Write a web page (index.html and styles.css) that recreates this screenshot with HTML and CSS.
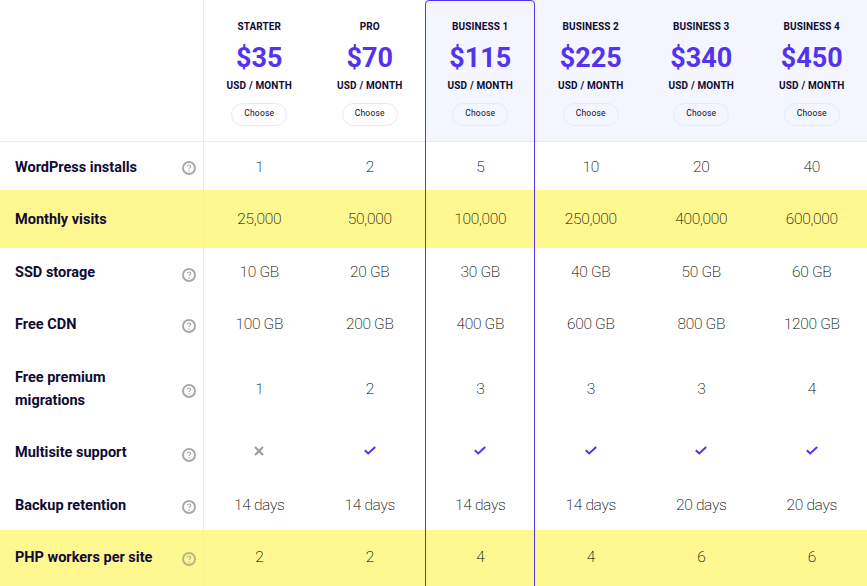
FILE: index.html
```html
<!DOCTYPE html>
<html lang="en">
<head>
<meta charset="utf-8">
<title>Plans</title>
<link rel="stylesheet" href="styles.css">
</head>
<body>
<svg class="defs" width="0" height="0" aria-hidden="true">
  <symbol id="q" viewBox="0 0 14 14">
    <circle cx="7" cy="7" r="6" fill="none" stroke="currentColor" stroke-width="2"/>
    <path d="M5.3 5.6c0-1 .7-1.6 1.7-1.6s1.7.6 1.7 1.4c0 1.2-1.7 1.3-1.7 2.6" fill="none" stroke="currentColor" stroke-width="1.2"/>
    <circle cx="7" cy="10" r=".8" fill="currentColor"/>
  </symbol>
  <symbol id="check" viewBox="0 0 12 9">
    <path d="M.8 4.2 4.2 7.4 11.2 1" fill="none" stroke="currentColor" stroke-width="2"/>
  </symbol>
  <symbol id="cross" viewBox="0 0 10 10">
    <path d="M1 1l8 8M9 1 1 9" fill="none" stroke="currentColor" stroke-width="2"/>
  </symbol>
</svg>
<main class="table">
  <div class="row head">
    <div class="label blank"></div>
    <div class="plan"><span class="name">STARTER</span><span class="price">$35</span><span class="unit">USD / MONTH</span><button class="choose">Choose</button></div>
    <div class="plan"><span class="name">PRO</span><span class="price">$70</span><span class="unit">USD / MONTH</span><button class="choose">Choose</button></div>
    <div class="plan biz"><span class="name">BUSINESS 1</span><span class="price">$115</span><span class="unit">USD / MONTH</span><button class="choose">Choose</button></div>
    <div class="plan biz"><span class="name">BUSINESS 2</span><span class="price">$225</span><span class="unit">USD / MONTH</span><button class="choose">Choose</button></div>
    <div class="plan biz"><span class="name">BUSINESS 3</span><span class="price">$340</span><span class="unit">USD / MONTH</span><button class="choose">Choose</button></div>
    <div class="plan biz"><span class="name">BUSINESS 4</span><span class="price">$450</span><span class="unit">USD / MONTH</span><button class="choose">Choose</button></div>
  </div>
  <div class="row r-installs">
    <div class="label"><span>WordPress installs</span><svg class="help"><use href="#q"/></svg></div>
    <div class="val">1</div><div class="val">2</div><div class="val">5</div><div class="val">10</div><div class="val">20</div><div class="val">40</div>
  </div>
  <div class="row hl r-visits">
    <div class="label"><span>Monthly visits</span></div>
    <div class="val">25,000</div><div class="val">50,000</div><div class="val">100,000</div><div class="val">250,000</div><div class="val">400,000</div><div class="val">600,000</div>
  </div>
  <div class="row r-ssd">
    <div class="label"><span>SSD storage</span><svg class="help"><use href="#q"/></svg></div>
    <div class="val">10 GB</div><div class="val">20 GB</div><div class="val">30 GB</div><div class="val">40 GB</div><div class="val">50 GB</div><div class="val">60 GB</div>
  </div>
  <div class="row r-cdn">
    <div class="label"><span>Free CDN</span><svg class="help"><use href="#q"/></svg></div>
    <div class="val">100 GB</div><div class="val">200 GB</div><div class="val">400 GB</div><div class="val">600 GB</div><div class="val">800 GB</div><div class="val">1200 GB</div>
  </div>
  <div class="row r-migr">
    <div class="label"><span>Free premium<br>migrations</span><svg class="help"><use href="#q"/></svg></div>
    <div class="val">1</div><div class="val">2</div><div class="val">3</div><div class="val">3</div><div class="val">3</div><div class="val">4</div>
  </div>
  <div class="row r-multi">
    <div class="label"><span>Multisite support</span><svg class="help"><use href="#q"/></svg></div>
    <div class="val"><svg class="no"><use href="#cross"/></svg></div>
    <div class="val"><svg class="yes"><use href="#check"/></svg></div>
    <div class="val"><svg class="yes"><use href="#check"/></svg></div>
    <div class="val"><svg class="yes"><use href="#check"/></svg></div>
    <div class="val"><svg class="yes"><use href="#check"/></svg></div>
    <div class="val"><svg class="yes"><use href="#check"/></svg></div>
  </div>
  <div class="row r-backup">
    <div class="label"><span>Backup retention</span><svg class="help"><use href="#q"/></svg></div>
    <div class="val">14 days</div><div class="val">14 days</div><div class="val">14 days</div><div class="val">14 days</div><div class="val">20 days</div><div class="val">20 days</div>
  </div>
  <div class="row hl r-php">
    <div class="label"><span>PHP workers per site</span><svg class="help faint"><use href="#q"/></svg></div>
    <div class="val">2</div><div class="val">2</div><div class="val">4</div><div class="val">4</div><div class="val">6</div><div class="val">6</div>
  </div>
  <div class="featured" aria-hidden="true"></div>
</main>
</body>
</html>
```
FILE: styles.css
```css
* { box-sizing: border-box; }
html, body { margin: 0; height: 586px; overflow: hidden; background: #fff; }
body { font-family: Roboto, "Liberation Sans", sans-serif; color: #0f0b33; }
.defs { position: absolute; }
.table { position: relative; width: 867px; height: 586px; overflow: hidden; }
.row { display: grid; grid-template-columns: 204px repeat(6, 1fr); align-items: stretch; }
.head { height: 142px; border-bottom: 1px solid #e5ebf5; }
.hl { background: #fff891; }
.r-installs { height: 48px; }
.r-visits { height: 58px; }
.r-ssd { height: 49px; }
.r-cdn { height: 54px; }
.r-migr { height: 76px; }
.r-multi { height: 51px; }
.r-backup { height: 52px; }
.r-php { height: 56px; }

.label {
  display: flex; align-items: center; justify-content: space-between;
  padding: 0 7px 0 15px; border-right: 1px solid #e5ebf5;
  font-size: 14.5px; line-height: 23px; font-weight: 700;
}
.help { width: 14px; height: 14px; color: #a8a8a8; margin-top: 4px; flex: none; }
.help.faint { color: #b8b48a; }
.val {
  display: flex; align-items: center; justify-content: center;
  font-size: 15.5px; line-height: 23px; font-weight: 200; letter-spacing: -.3px; color: #000;
}
.r-installs > * { padding-top: 2px; }
.r-installs .help { margin-top: 2px; }
.r-backup > * { padding-top: 2px; }
.r-php > * { padding-bottom: 2px; }
.yes { width: 12px; height: 9px; color: #5333ed; margin-top: -4px; }
.no { width: 10px; height: 10px; color: #9b9b9b; margin-top: -4px; }

.plan { display: flex; flex-direction: column; align-items: center; padding-top: 20px; }
.biz { background: #f3f6fe; }
.name { font-size: 10px; line-height: 13px; font-weight: 700; letter-spacing: .1px; }
.price { font-size: 27px; line-height: 34px; font-weight: 700; color: #5333ed; margin-top: 8px; }
.unit { font-size: 10px; line-height: 13px; font-weight: 700; letter-spacing: .15px; margin-top: 4px; }
.choose {
  width: 56px; height: 23px; margin-top: 11px; padding: 0 0 3px;
  background: transparent; border: 1px solid #e5ebf5; border-radius: 12px;
  font: 400 8.5px/12px Roboto, sans-serif; color: #0f0b33; letter-spacing: .2px;
}
.featured {
  position: absolute; left: 425px; top: 0; width: 110px; height: 600px;
  border: 1px solid #5333ed; border-radius: 4px; pointer-events: none;
}
```
